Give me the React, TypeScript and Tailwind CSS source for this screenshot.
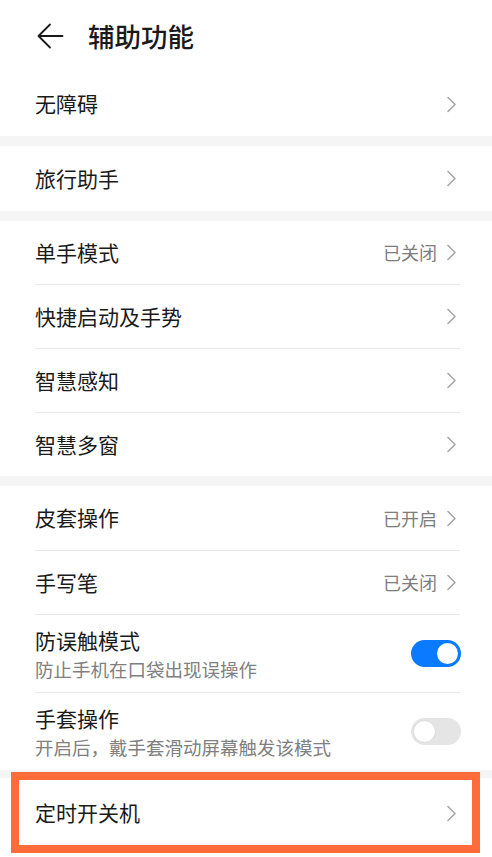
import React from 'react';

const font = { fontFamily: '"Noto Sans CJK SC", "Noto Sans", sans-serif' };

function Chevron() {
  return (
    <svg width="11" height="17" viewBox="0 0 11 17" className="shrink-0">
      <polyline points="2,1.5 9,8.5 2,15.5" fill="none" stroke="#a6a6a6" strokeWidth="1.6" strokeLinecap="round" strokeLinejoin="round" />
    </svg>
  );
}

function Toggle({ on }: { on: boolean }) {
  return on ? (
    <div className="w-[50px] h-[27px] rounded-full bg-[#0a7bff] flex items-center justify-end pr-[3px] shrink-0">
      <div className="w-[21px] h-[21px] rounded-full bg-white" />
    </div>
  ) : (
    <div className="w-[50px] h-[27px] rounded-full bg-[#e5e5e5] flex items-center pl-[2px] shrink-0">
      <div className="w-[23px] h-[23px] rounded-full bg-white border border-[#d9d9d9]" />
    </div>
  );
}

function Row({ label, value, h = 'h-[63px]' }: { label: string; value?: string; h?: string }) {
  return (
    <div className={`${h} flex items-center justify-between pl-[35px] pr-[35px]`}>
      <span className="text-[21px] text-[#1a1a1a]">{label}</span>
      <div className="flex items-center gap-[9px]">
        {value && <span className="text-[18px] text-[#7d7d7d]">{value}</span>}
        <Chevron />
      </div>
    </div>
  );
}

function SwitchRow({ label, sub, on }: { label: string; sub: string; on: boolean }) {
  return (
    <div className="h-[77px] flex items-center justify-between pl-[35px] pr-[31px]">
      <div className="flex flex-col">
        <span className="text-[21px] leading-[28px] text-[#1a1a1a]">{label}</span>
        <span className="text-[18.5px] leading-[26px] mt-[2px] text-[#808080]">{sub}</span>
      </div>
      <Toggle on={on} />
    </div>
  );
}

const Divider = () => <div className="h-px bg-[#e8e8e8] ml-[35px] mr-[32px]" />;
const Band = ({ h = 'h-[10px]' }: { h?: string }) => <div className={`${h} bg-[#f5f5f5]`} />;

export default function App() {
  return (
    <div className="w-[492px] h-[857px] bg-white overflow-hidden relative" style={font}>
      <div className="h-[72px] flex items-center pl-[37px]">
        <svg width="27" height="26" viewBox="0 0 27 26">
          <path d="M25.5 13H2 M13 1.5L1.5 13L13 24.5" fill="none" stroke="#1a1a1a" strokeWidth="1.8" strokeLinecap="round" strokeLinejoin="round" />
        </svg>
        <span className="ml-[24px] text-[26.5px] font-medium text-[#1a1a1a]">辅助功能</span>
      </div>

      <Row label="无障碍" h="h-[64px]" />
      <Band />
      <Row label="旅行助手" h="h-[65px]" />
      <Band />

      <Row label="单手模式" value="已关闭" />
      <Divider />
      <Row label="快捷启动及手势" />
      <Divider />
      <Row label="智慧感知" />
      <Divider />
      <Row label="智慧多窗" />
      <Band />

      <Row label="皮套操作" value="已开启" h="h-[64px]" />
      <Divider />
      <Row label="手写笔" value="已关闭" />
      <Divider />
      <SwitchRow label="防误触模式" sub="防止手机在口袋出现误操作" on />
      <Divider />
      <SwitchRow label="手套操作" sub="开启后，戴手套滑动屏幕触发该模式" on={false} />
      <Band h="h-[8px]" />
      <Row label="定时开关机" h="h-[70px]" />

      <div className="absolute left-[11px] top-[772px] w-[469px] h-[81px] border-[8px] border-[#ff6b3b]" />
    </div>
  );
}
